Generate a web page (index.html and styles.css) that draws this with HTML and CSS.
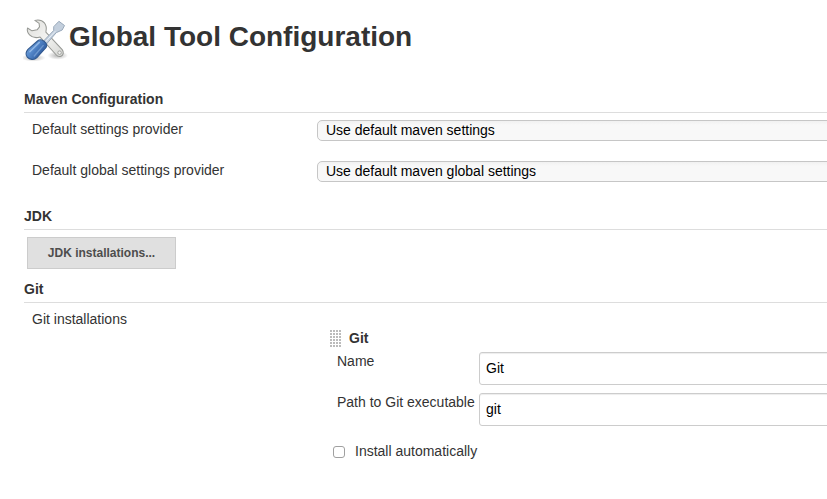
FILE: index.html
```html
<!DOCTYPE html>
<html lang="en">
<head>
<meta charset="utf-8">
<title>Global Tool Configuration</title>
<link rel="stylesheet" href="styles.css">
</head>
<body>
<main class="page">
  <h1 class="title">
    <svg class="title-icon" viewBox="0 0 48 48" aria-hidden="true">
      <defs>
        <linearGradient id="metal" x1="0" y1="0" x2="1" y2="1"><stop offset="0" stop-color="#dededb"/><stop offset=".5" stop-color="#f3f3f1"/><stop offset="1" stop-color="#d5d6d3"/></linearGradient>
        <linearGradient id="handle" x1="0" y1="0" x2="1" y2=".7"><stop offset="0" stop-color="#8cb4e4"/><stop offset=".45" stop-color="#5589cb"/><stop offset="1" stop-color="#244f93"/></linearGradient>
        <radialGradient id="shade"><stop offset="0" stop-color="#000" stop-opacity=".3"/><stop offset="1" stop-color="#000" stop-opacity="0"/></radialGradient>
      </defs>
      <ellipse cx="11" cy="42.500" rx="13" ry="4" fill="url(#shade)"/>
      <ellipse cx="37" cy="40" rx="11" ry="4.500" fill="url(#shade)"/>
      <path d="M12.600 2.600C16.500 1.800 20.500 2.500 22.800 5.200C24.900 7.700 25.300 11 24.400 15L41.800 33.700C43.800 36.200 43.300 39.700 40.500 40.700C38.500 41.400 36.800 40.800 35.300 39.200L18.200 20.300C14 21.500 9.700 20.800 7 18C4.900 15.800 4.200 13.100 4.800 10.700L9.600 13.700L15 12.600L17.600 9.500L17.200 5.800Z" fill="url(#metal)" stroke="#969894" stroke-width="1.100" stroke-linejoin="round"/>
      <circle cx="39" cy="37" r="1.900" fill="#eee" stroke="#a0a29e"/>
      <path d="M21.500 25L32.700 13.300L32.800 9.200L38.300 3.500L44.300 8L41.800 12.800L35.500 15.600L24.800 28Z" fill="#c3cfdd" stroke="#94a4b6" stroke-linejoin="round"/>
      <path d="M23.500 26L34.500 14" stroke="#e8eff6" stroke-width="1"/>
      <path d="M15.500 24.500C17.500 22.800 20.300 23 22.800 25C25.200 27 26 29.300 24.600 31.500L15 42C11.800 45.300 7 44.600 4.600 41.800C2.500 39.200 3 36.200 5.300 33.500Z" fill="url(#handle)" stroke="#31598f" stroke-width="1.200"/>
      <path d="M17.500 26L7.300 36" stroke="#a4c7f0" stroke-width="1.500" stroke-linecap="round" opacity=".75"/>
      <path d="M21.500 29.500L12 40.500" stroke="#a4c7f0" stroke-width="1.500" stroke-linecap="round" opacity=".45"/>
    </svg>
    <span>Global Tool Configuration</span>
  </h1>

  <section class="section maven">
    <h2 class="section-title">Maven Configuration</h2>
    <div class="row">
      <span class="label">Default settings provider</span>
      <div class="select">Use default maven settings</div>
    </div>
    <div class="row">
      <span class="label">Default global settings provider</span>
      <div class="select">Use default maven global settings</div>
    </div>
  </section>

  <section class="section jdk">
    <h2 class="section-title">JDK</h2>
    <button class="button" type="button">JDK installations...</button>
  </section>

  <section class="section">
    <h2 class="section-title">Git</h2>
    <div class="row">
      <span class="label">Git installations</span>
      <div class="tool">
        <div class="tool-head"><span class="grip"></span><b>Git</b></div>
        <div class="field"><label for="name">Name</label><input id="name" class="input" type="text" value="Git"></div>
        <div class="field"><label for="path">Path to Git executable</label><input id="path" class="input" type="text" value="git"></div>
        <label class="check"><input class="box" type="checkbox"><span>Install automatically</span></label>
      </div>
    </div>
  </section>
</main>
</body>
</html>
```
FILE: styles.css
```css
* { box-sizing: border-box; }
body {
  margin: 0;
  overflow: hidden;
  background: #fff;
  color: #333;
  font: 14px/20px "Liberation Sans", Arial, sans-serif;
}
.page { padding: 17px 0 0 24px; }
.title {
  display: flex;
  height: 48px;
  margin: 0 0 24px;
  font-size: 28px;
  line-height: 40px;
  white-space: nowrap;
}
.title-icon { flex: none; width: 45px; height: 45px; margin: 1px 1px 0 -1px; }
.section-title {
  height: 24px;
  margin: 0 0 6px;
  border-bottom: 1px solid #ddd;
  font-size: 14px;
  line-height: 20px;
}
.row { display: flex; }
.label { flex: none; width: 293px; padding-left: 8px; }
.maven .row { height: 41px; }
.maven { height: 117px; }
.jdk { height: 73px; }
.select {
  flex: 1;
  height: 21px;
  margin: 1px -10px 0 0;
  padding-left: 8px;
  border: 1px solid #c6c6c6;
  border-radius: 5px;
  background: linear-gradient(#f1f1f1, #f8f8f8 4px);
  color: #000;
  line-height: 19px;
}
.button {
  display: block;
  width: 149px;
  height: 32px;
  margin: 7px 0 0 3px;
  padding: 0;
  border: 1px solid #ccc;
  background: #e0e0e0;
  color: #4d4d4d;
  font: bold 12px/30px "Liberation Sans", Arial, sans-serif;
}
.tool { flex: 1; padding: 19px 0 0 13px; }
.tool-head { display: flex; align-items: center; gap: 8px; height: 20px; }
.grip {
  width: 11px;
  height: 17px;
  background: radial-gradient(circle at 1px 1px, #bbb 1px, transparent 1.300px) 0 0 / 3px 3px;
}
.field { display: flex; height: 41px; padding-left: 7px; }
.field label { width: 142px; padding-top: 3px; white-space: nowrap; }
.input {
  flex: 1;
  height: 33px;
  margin: 4px -10px 0 0;
  padding: 0 6px 1px;
  border: 1px solid #ccc;
  border-radius: 3px;
  box-shadow: inset 0 1px 1px rgba(0, 0, 0, .075);
  color: #000;
  font: 14px/20px "Liberation Sans", Arial, sans-serif;
}
.check { display: flex; align-items: center; gap: 10px; height: 20px; margin: 11px 0 0 3px; }
.box {
  appearance: none;
  width: 12px;
  height: 12px;
  margin: 1px 0 0;
  border: 1px solid #a0a0a0;
  border-radius: 3px;
  background: #fff;
}
```
